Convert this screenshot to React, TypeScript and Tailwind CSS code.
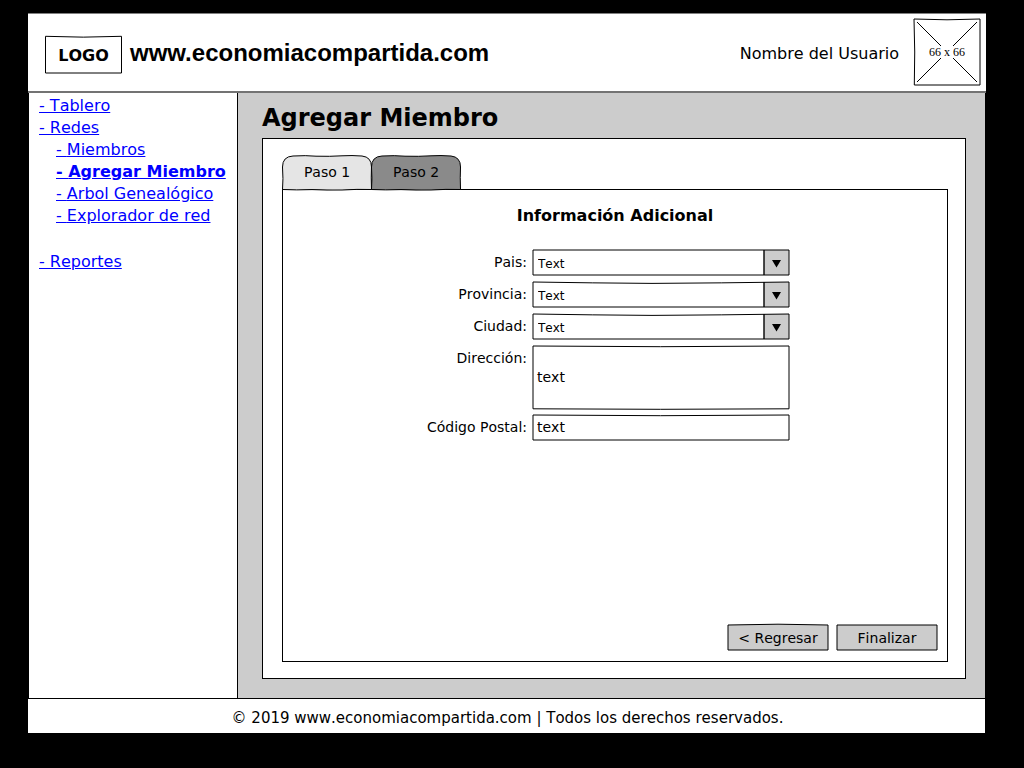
import type { ReactNode } from "react";

type OutlineProps = {
  width: number;
  height: number;
  d: string;
  fill?: string;
};

/** Hand-drawn frame that stretches with the box it sits in. */
function Outline({ width, height, d, fill = "none" }: OutlineProps) {
  return (
    <svg
      aria-hidden="true"
      className="pointer-events-none absolute inset-0 size-full overflow-visible"
      viewBox={`0 0 ${width} ${height}`}
      preserveAspectRatio="none"
      fill={fill}
      stroke="#000"
      strokeWidth="1"
    >
      <path d={d} vectorEffect="non-scaling-stroke" />
    </svg>
  );
}

const flat = "M1 1H257V26H1Z";
const sagging = "M1 1Q60 2 120 2.4Q190 2 257 1V26H1Z";

function SelectField({ id, outline }: { id: string; outline: string }) {
  return (
    <div className="relative h-[27px]">
      <select
        id={id}
        className="block h-full w-full appearance-none bg-transparent pt-0.5 pr-8 pl-1.5 text-xs text-black [font-kerning:none]"
      >
        <option>Text</option>
      </select>
      <span className="pointer-events-none absolute inset-y-0 right-0 w-[27px]">
        <svg aria-hidden="true" className="size-full" viewBox="0 0 27 27">
          <path d="M1 1H26V26H1Z" fill="#ccc" />
          <path d="M1 1V26" stroke="#000" strokeWidth="1.4" />
          <path d="M9 11H18L13.5 18.5Z" />
        </svg>
      </span>
      <Outline width={258} height={27} d={outline} />
    </div>
  );
}

function Label({ htmlFor, children }: { htmlFor: string; children: ReactNode }) {
  return (
    <label htmlFor={htmlFor} className="pt-[3px] text-right text-sm">
      {children}
    </label>
  );
}

function Tab({ label, selected, fill }: { label: string; selected: boolean; fill: string }) {
  return (
    <button
      type="button"
      role="tab"
      aria-selected={selected}
      className="relative h-[35px] w-[90px] pb-0.5 text-sm"
    >
      <Outline
        width={90}
        height={35}
        fill={fill}
        d="M0.5 34.5Q1.4 24 0.5 12Q0.5 1.5 11 1Q24 0.2 34 1.2Q48 1.6 60 0.8Q70 0.2 80 1Q89.5 2 89.5 12Q89 22 89.5 34.5Q75 34 60 35Q45 35.3 30 34.6Q14 35.2 0.5 34.5Z"
      />
      <span className="relative">{label}</span>
    </button>
  );
}

function ActionButton({ children, outline }: { children: ReactNode; outline: string }) {
  return (
    <button type="button" className="relative h-[27px] w-[102px] text-sm">
      <Outline width={102} height={27} fill="#ccc" d={outline} />
      <span className="relative">{children}</span>
    </button>
  );
}

const sections = [
  { label: "Miembros", current: false },
  { label: "Agregar Miembro", current: true },
  { label: "Arbol Genealógico", current: false },
  { label: "Explorador de red", current: false },
];

export default function App() {
  return (
    <div className="flex min-h-screen flex-col bg-black pt-[13px] pr-[38px] pb-[35px] pl-7 font-['DejaVu_Sans',sans-serif] text-black [font-kerning:none]">
      <header className="flex h-20 items-center border-t border-b-2 border-t-[#808080] border-b-[#737373] bg-white pr-[5px] pl-[17px]">
        <div className="relative mt-1 flex h-[38px] w-[77px] items-center justify-center pt-0.5 font-bold">
          <Outline width={77} height={38} d="M0.5 0.3Q38 2 76.5 0.3V37H0.5Z" />
          <span className="relative">LOGO</span>
        </div>
        <div className="ml-2 pt-px font-['Liberation_Sans',sans-serif] text-2xl font-bold [font-kerning:normal]">
          www.economiacompartida.com
        </div>
        <div className="ml-auto pt-0.5">Nombre del Usuario</div>
        <div className="relative mb-0.5 ml-3.5 flex size-[68px] items-center justify-center font-['Liberation_Serif',serif] text-xs">
          <svg
            aria-hidden="true"
            className="absolute inset-0 size-full"
            viewBox="0 0 68 68"
            fill="none"
            stroke="#000"
          >
            <path d="M1 1Q34 2.6 67 1V67H1.3Q2.3 34 1 1Z" />
            <path
              d="M4 4L28 28M64 4L40 28M4 64L28 40M64 64L40 40"
              shapeRendering="crispEdges"
            />
          </svg>
          <span className="relative">66 x 66</span>
        </div>
      </header>

      <div className="mr-px flex flex-1">
        <nav className="w-[210px] shrink-0 border-x border-black bg-white pt-0.5 pl-2.5 leading-[22px] whitespace-nowrap text-[#0000ff]">
          <ul>
            <li>
              <a href="#tablero" className="underline">- Tablero</a>
            </li>
            <li>
              <a href="#redes" className="underline">- Redes</a>
              <ul className="pl-[17px]">
                {sections.map((s) => (
                  <li key={s.label}>
                    <a
                      href="#redes"
                      aria-current={s.current ? "page" : undefined}
                      className={s.current ? "font-bold underline" : "underline"}
                    >
                      - {s.label}
                    </a>
                  </li>
                ))}
              </ul>
            </li>
            <li className="mt-6">
              <a href="#reportes" className="underline">- Reportes</a>
            </li>
          </ul>
        </nav>

        <main className="flex flex-1 flex-col bg-[#ccc] pt-[9px] pr-[19px] pb-[19px] pl-6">
          <h1 className="mb-1 text-2xl font-bold">Agregar Miembro</h1>
          <section className="flex flex-1 flex-col border border-black bg-white px-[17px] py-4 pl-[19px]">
            <div role="tablist" className="flex -space-x-px">
              <Tab label="Paso 1" selected={false} fill="#e5e5e5" />
              <Tab label="Paso 2" selected fill="#8a8a8a" />
            </div>
            <form
              className="-mt-px flex flex-1 flex-col border border-black px-[9px] pt-4 pb-2.5"
              onSubmit={(e) => e.preventDefault()}
            >
              <h2 className="text-center text-base leading-5 font-bold">
                Información Adicional
              </h2>
              <div className="mt-[23px] grid grid-cols-[auto_258px] justify-center gap-x-[5px] gap-y-[5px] pr-[13px]">
                <Label htmlFor="pais">Pais:</Label>
                <SelectField id="pais" outline={flat} />
                <Label htmlFor="provincia">Provincia:</Label>
                <SelectField id="provincia" outline={sagging} />
                <Label htmlFor="ciudad">Ciudad:</Label>
                <SelectField id="ciudad" outline={sagging} />
                <Label htmlFor="direccion">Dirección:</Label>
                <div className="relative h-16">
                  <textarea
                    id="direccion"
                    defaultValue="text"
                    className="block size-full resize-none bg-transparent px-[5px] pt-[22px] text-sm"
                  />
                  <Outline width={258} height={64} d="M1 1Q128 2.4 257 1V63.8Q128 64.8 1 63.8Z" />
                </div>
                <Label htmlFor="postal">Código Postal:</Label>
                <div className="relative h-[27px]">
                  <input
                    id="postal"
                    type="text"
                    defaultValue="text"
                    className="block size-full bg-transparent px-[5px] pb-0.5 text-sm"
                  />
                  <Outline width={258} height={27} d="M1 1Q128 2.4 257 1V26H1Z" />
                </div>
              </div>
              <div className="mt-auto flex justify-end gap-[7px]">
                <ActionButton outline="M1 1Q51 -0.6 101 1V26H1Z">&lt; Regresar</ActionButton>
                <ActionButton outline="M1 1H101V26H1Z">Finalizar</ActionButton>
              </div>
            </form>
          </section>
        </main>
      </div>

      <footer className="mr-px flex h-[35px] items-center justify-center border-t border-black bg-white pt-1 pl-0.5 text-[15px]">
        © 2019 www.economiacompartida.com | Todos los derechos reservados.
      </footer>
    </div>
  );
}
